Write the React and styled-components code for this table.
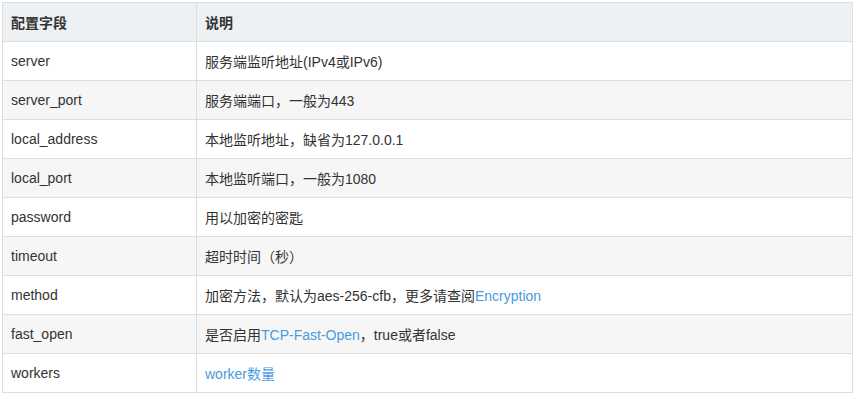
import React from "react";
import styled, { createGlobalStyle } from "styled-components";

const GlobalStyle = createGlobalStyle`
    body {
        margin: 0;
        background: #FFFFFF;
        font-family: "Liberation Sans", "Noto Sans CJK SC", sans-serif;
    }
`;

const Wrapper = styled.div`
    padding: 2px 2px 0 2px;
`;

const StyledTable = styled.table`
    width: 851px;
    border-collapse: collapse;
    font-size: 14px;
    color: #333;
`;

const HeadCell = styled.th`
    height: 38px;
    padding: 0 8px;
    text-align: left;
    font-weight: 700;
    background: #EEF1F4;
    border: 1px solid #DDD;
    &:first-child {
        width: 177px;
    }
`;

const Row = styled.tr`
    background: ${props => (props.$striped ? "#F6F6F6" : "#FFFFFF")};
`;

const Cell = styled.td`
    height: 38px;
    padding: 0 8px;
    border: 1px solid #DDD;
`;

const StyledLink = styled.a`
    color: #4A9BDD;
    text-decoration: none;
`;

const rows = [
    ["server", "服务端监听地址(IPv4或IPv6)"],
    ["server_port", "服务端端口，一般为443"],
    ["local_address", "本地监听地址，缺省为127.0.0.1"],
    ["local_port", "本地监听端口，一般为1080"],
    ["password", "用以加密的密匙"],
    ["timeout", "超时时间（秒）"],
    ["method", <>加密方法，默认为aes-256-cfb，更多请查阅<StyledLink href="#">Encryption</StyledLink></>],
    ["fast_open", <>是否启用<StyledLink href="#">TCP-Fast-Open</StyledLink>，true或者false</>],
    ["workers", <StyledLink href="#">worker数量</StyledLink>],
];

const App = () => {
    return (
        <Wrapper>
            <GlobalStyle />
            <StyledTable>
                <thead>
                    <tr>
                        <HeadCell>配置字段</HeadCell>
                        <HeadCell>说明</HeadCell>
                    </tr>
                </thead>
                <tbody>
                    {rows.map(([field, desc], i) => (
                        <Row key={field} $striped={i % 2 === 1}>
                            <Cell>{field}</Cell>
                            <Cell>{desc}</Cell>
                        </Row>
                    ))}
                </tbody>
            </StyledTable>
        </Wrapper>
    );
};

export default App;
